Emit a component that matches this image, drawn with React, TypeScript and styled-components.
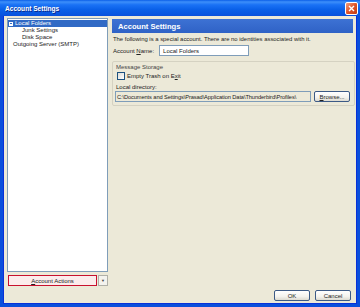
import React from 'react';
import styled, { createGlobalStyle } from 'styled-components';

const GlobalStyle = createGlobalStyle`
  html, body {
    margin: 0;
    padding: 0;
    background: #ece9d8;
  }
  body {
    font-family: 'Liberation Sans', 'DejaVu Sans', Arial, sans-serif;
    font-size: 6px;
    color: #000;
  }
`;

const Window = styled.div`
  width: 360px;
  height: 307px;
  box-sizing: border-box;
  display: flex;
  flex-direction: column;
  background: #ece9d8;
  border: 3px solid #0a4fdc;
  border-top: none;
  box-shadow: inset 1px 0 0 #0831d9, inset -1px 0 0 #0831d9, inset 0 -1px 0 #0831d9;
`;

const TitleBar = styled.div`
  height: 16px;
  margin: 0 -3px;
  padding: 0 2px 0 5px;
  display: flex;
  align-items: center;
  justify-content: space-between;
  background: linear-gradient(to bottom, #0b5fe8 0%, #3d8ffa 12%, #1a72f5 30%, #0a60e8 60%, #0856e0 90%, #0a4fdc 100%);
`;

const Title = styled.span`
  color: #fff;
  font-weight: bold;
  font-size: 6.6px;
  text-shadow: 1px 1px 0 #0a2a8a;
`;

const CloseBox = styled.div`
  width: 13px;
  height: 13px;
  box-sizing: border-box;
  border: 1px solid #fff;
  border-radius: 2px;
  background: linear-gradient(135deg, #f0a080 0%, #e0552a 50%, #c03a10 100%);
  display: flex;
  align-items: center;
  justify-content: center;
`;

const Body = styled.div`
  flex: 1;
  display: flex;
  flex-direction: column;
  padding: 2px 1px 3px 4px;
  min-height: 0;
`;

const Main = styled.div`
  flex: 1;
  display: flex;
  gap: 4px;
  min-height: 0;
`;

const Sidebar = styled.div`
  flex: none;
  width: 101px;
  display: flex;
  flex-direction: column;
`;

const Tree = styled.div`
  flex: 1;
  background: #fff;
  border: 1px solid #7f9db9;
  padding-top: 1px;
`;

const TreeRow = styled.div<{ $indent: number; $selected?: boolean }>`
  height: 7px;
  line-height: 7px;
  padding-left: ${p => p.$indent}px;
  display: flex;
  align-items: center;
  gap: 2px;
  white-space: nowrap;
  background: ${p => (p.$selected ? '#316ac5' : 'transparent')};
  color: ${p => (p.$selected ? '#fff' : '#222')};
`;

const Twisty = styled.span`
  width: 4px;
  height: 4px;
  border: 1px solid #fff;
  box-sizing: border-box;
  position: relative;
  &::after {
    content: '';
    position: absolute;
    left: 0;
    top: 1px;
    width: 2px;
    height: 1px;
    background: #fff;
  }
`;

const ActionRow = styled.div`
  height: 11px;
  margin-top: 3px;
  display: flex;
  align-items: stretch;
`;

const ActionButton = styled.div`
  flex: 1;
  margin-left: 1px;
  border: 1px solid #c8102e;
  background: #fbecec;
  display: flex;
  align-items: center;
  justify-content: center;
  color: #222;
`;

const DropArrow = styled.div`
  width: 8px;
  margin-left: 1px;
  border: 1px solid #b0b0a8;
  background: #f4f3ee;
  display: flex;
  align-items: center;
  justify-content: center;
  font-size: 4px;
  color: #444;
`;

const Content = styled.div`
  flex: 1;
  min-width: 0;
  display: flex;
  flex-direction: column;
  padding-right: 3px;
`;

const Header = styled.div`
  height: 14px;
  margin-top: 1px;
  padding-left: 6px;
  display: flex;
  align-items: center;
  background: linear-gradient(to bottom, #3d72d4 0%, #2f62c6 100%);
  color: #fff;
  font-weight: bold;
  font-size: 7.6px;
`;

const Intro = styled.div`
  margin: 3px 0 0 1px;
  white-space: nowrap;
  font-size: 5.9px;
  color: #222;
`;

const FieldRow = styled.div`
  display: flex;
  align-items: center;
  margin: 3px 0 0 1px;
  gap: 5px;
  color: #222;
`;

const TextBox = styled.div<{ $width?: number; $gray?: boolean }>`
  height: 11px;
  box-sizing: border-box;
  width: ${p => (p.$width ? `${p.$width}px` : 'auto')};
  flex: ${p => (p.$width ? 'none' : '1')};
  min-width: 0;
  border: 1px solid #7f9db9;
  background: ${p => (p.$gray ? '#ece9d8' : '#fff')};
  padding: 0 ${p => (p.$gray ? 1 : 3)}px;
  display: flex;
  align-items: center;
  white-space: nowrap;
  overflow: hidden;
  font-size: ${p => (p.$gray ? 5.7 : 6)}px;
  letter-spacing: ${p => (p.$gray ? -0.1 : 0)}px;
  color: #222;
`;

const GroupBox = styled.div`
  margin: 5px -2px 0 0;
  border: 1px solid #d5d2c2;
  border-radius: 2px;
  padding: 2px 4px 3px 2px;
  display: flex;
  flex-direction: column;
  color: #222;
`;

const Caption = styled.div`
  color: #444;
  padding-left: 1px;
`;

const CheckRow = styled.div`
  display: flex;
  align-items: center;
  gap: 2px;
  margin: 2px 0 0 2px;
`;

const Check = styled.span`
  width: 8px;
  height: 8px;
  box-sizing: border-box;
  border: 1px solid #1c5180;
  background: linear-gradient(135deg, #dcdcd7 0%, #fff 100%);
`;

const DirLabel = styled.div`
  margin: 4px 0 0 1px;
`;

const DirRow = styled.div`
  display: flex;
  align-items: center;
  gap: 3px;
  margin-top: 1px;
`;

const PushButton = styled.div<{ $width: number }>`
  flex: none;
  width: ${p => p.$width}px;
  height: 11px;
  box-sizing: border-box;
  border: 1px solid #3c5a86;
  border-radius: 2px;
  background: linear-gradient(to bottom, #fff 0%, #f4f3ee 60%, #dcdad0 100%);
  display: flex;
  align-items: center;
  justify-content: center;
  color: #222;
`;

const Footer = styled.div`
  display: flex;
  justify-content: flex-end;
  gap: 5px;
  padding: 4px 5px 0 0;
`;

const U = styled.span`
  text-decoration: underline;
`;

export default function App() {
  return (
    <>
      <GlobalStyle />
      <Window>
        <TitleBar>
          <Title>Account Settings</Title>
          <CloseBox>
            <svg width="7" height="7" viewBox="0 0 7 7">
              <path d="M1 1L6 6M6 1L1 6" stroke="#fff" strokeWidth="1.4" />
            </svg>
          </CloseBox>
        </TitleBar>
        <Body>
          <Main>
            <Sidebar>
              <Tree>
                <TreeRow $indent={1} $selected>
                  <Twisty />
                  Local Folders
                </TreeRow>
                <TreeRow $indent={14}>Junk Settings</TreeRow>
                <TreeRow $indent={14}>Disk Space</TreeRow>
                <TreeRow $indent={5}>Outgoing Server (SMTP)</TreeRow>
              </Tree>
              <ActionRow>
                <ActionButton>
                  <span>
                    <U>A</U>ccount Actions
                  </span>
                </ActionButton>
                <DropArrow>▼</DropArrow>
              </ActionRow>
            </Sidebar>
            <Content>
              <Header>Account Settings</Header>
              <Intro>The following is a special account. There are no identities associated with it.</Intro>
              <FieldRow>
                <span>
                  Account <U>N</U>ame:
                </span>
                <TextBox $width={90}>Local Folders</TextBox>
              </FieldRow>
              <GroupBox>
                <Caption>Message Storage</Caption>
                <CheckRow>
                  <Check />
                  <span>
                    Empty Trash on E<U>x</U>it
                  </span>
                </CheckRow>
                <DirLabel>Local directory:</DirLabel>
                <DirRow>
                  <TextBox $gray>C:\Documents and Settings\Prasad\Application Data\Thunderbird\Profiles\</TextBox>
                  <PushButton $width={36}>
                    <span>
                      <U>B</U>rowse...
                    </span>
                  </PushButton>
                </DirRow>
              </GroupBox>
            </Content>
          </Main>
          <Footer>
            <PushButton $width={36}>OK</PushButton>
            <PushButton $width={36}>Cancel</PushButton>
          </Footer>
        </Body>
      </Window>
    </>
  );
}
